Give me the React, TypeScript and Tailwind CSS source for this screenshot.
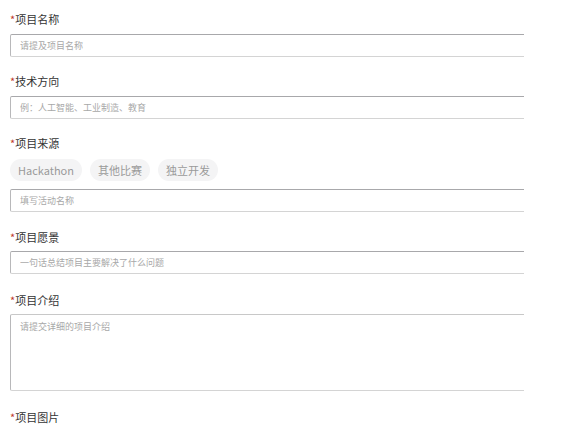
import React from "react";

const font = { fontFamily: '"Noto Sans CJK SC", "Noto Sans", sans-serif' };

function Label({ text, className = "" }: { text: string; className?: string }) {
  return (
    <div className={"h-[16px] leading-[16px] text-[11px] text-[#333] " + className}>
      <span className="text-[#c0392b]">*</span>
      {text}
    </div>
  );
}

function Field({ placeholder, className = "" }: { placeholder: string; className?: string }) {
  return (
    <input
      readOnly
      placeholder={placeholder}
      className={
        "block h-[23px] w-[560px] rounded-[2px] border border-[#d4d4d4] border-t-[#a8a8ab] border-l-[#b8b8ba] bg-white px-[9px] text-[9px] outline-none placeholder:text-[#a8a8a8] " +
        className
      }
    />
  );
}

export default function App() {
  return (
    <div className="h-[433px] w-[563px] overflow-hidden bg-white" style={font}>
      <div className="w-[524px] overflow-hidden pl-[10px]">
        <Label text="项目名称" className="mt-[11px]" />
        <Field placeholder="请提及项目名称" className="mt-[7px]" />

        <Label text="技术方向" className="mt-[16px]" />
        <Field placeholder="例：人工智能、工业制造、教育" className="mt-[7px]" />

        <Label text="项目来源" className="mt-[16px]" />
        <div className="mt-[8px] flex gap-[8px]">
          {["Hackathon", "其他比赛", "独立开发"].map((t) => (
            <div
              key={t}
              className="flex h-[22px] items-center rounded-full bg-[#f4f4f5] px-[8px] text-[11px] text-[#9a9a9a]"
            >
              {t}
            </div>
          ))}
        </div>
        <Field placeholder="填写活动名称" className="mt-[8px]" />

        <Label text="项目愿景" className="mt-[17px]" />
        <Field placeholder="一句话总结项目主要解决了什么问题" className="mt-[6px]" />

        <Label text="项目介绍" className="mt-[18px]" />
        <textarea
          readOnly
          placeholder="请提交详细的项目介绍"
          className="mt-[6px] block h-[77px] w-[560px] resize-none rounded-[2px] border border-[#d4d4d4] border-t-[#c8c8c8] border-l-[#b8b8ba] bg-white px-[9px] py-[5px] text-[9px] outline-none placeholder:text-[#a8a8a8]"
        />

        <Label text="项目图片" className="mt-[18px]" />
      </div>
    </div>
  );
}
